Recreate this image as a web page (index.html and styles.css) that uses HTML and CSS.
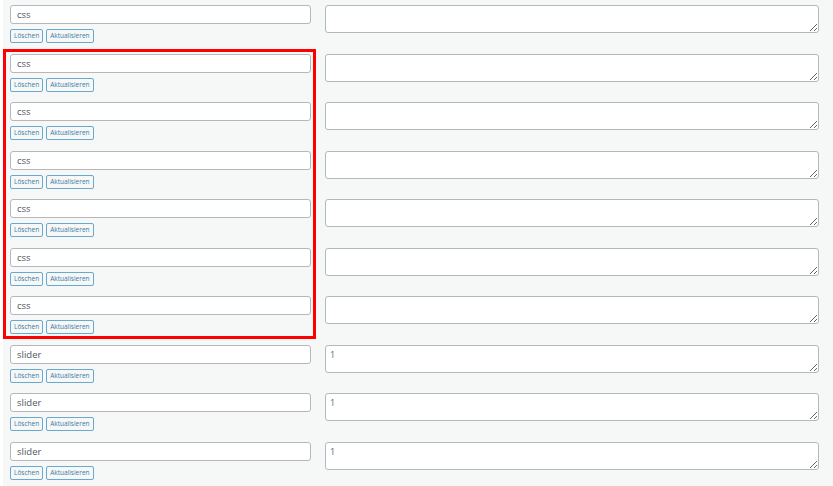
FILE: index.html
```html
<!DOCTYPE html>
<html lang="de">
<head>
    <meta charset="UTF-8">
    <meta name="viewport" content="width=device-width, initial-scale=1.0">
    <title>Optionen</title>
    <link rel="stylesheet" href="styles.css">
</head>
<body>
    <div class="options">
        <div class="row">
            <div class="field">
                <input class="key" value="css">
                <div class="actions">
                    <button class="btn">Löschen</button>
                    <button class="btn">Aktualisieren</button>
                </div>
            </div>
            <textarea class="value"></textarea>
        </div>

        <div class="marked">
            <div class="row">
                <div class="field">
                    <input class="key" value="css">
                    <div class="actions">
                        <button class="btn">Löschen</button>
                        <button class="btn">Aktualisieren</button>
                    </div>
                </div>
                <textarea class="value"></textarea>
            </div>
            <div class="row">
                <div class="field">
                    <input class="key" value="css">
                    <div class="actions">
                        <button class="btn">Löschen</button>
                        <button class="btn">Aktualisieren</button>
                    </div>
                </div>
                <textarea class="value"></textarea>
            </div>
            <div class="row">
                <div class="field">
                    <input class="key" value="css">
                    <div class="actions">
                        <button class="btn">Löschen</button>
                        <button class="btn">Aktualisieren</button>
                    </div>
                </div>
                <textarea class="value"></textarea>
            </div>
            <div class="row">
                <div class="field">
                    <input class="key" value="css">
                    <div class="actions">
                        <button class="btn">Löschen</button>
                        <button class="btn">Aktualisieren</button>
                    </div>
                </div>
                <textarea class="value"></textarea>
            </div>
            <div class="row">
                <div class="field">
                    <input class="key" value="css">
                    <div class="actions">
                        <button class="btn">Löschen</button>
                        <button class="btn">Aktualisieren</button>
                    </div>
                </div>
                <textarea class="value"></textarea>
            </div>
            <div class="row">
                <div class="field">
                    <input class="key" value="css">
                    <div class="actions">
                        <button class="btn">Löschen</button>
                        <button class="btn">Aktualisieren</button>
                    </div>
                </div>
                <textarea class="value"></textarea>
            </div>
        </div>

        <div class="row">
            <div class="field">
                <input class="key" value="slider">
                <div class="actions">
                    <button class="btn">Löschen</button>
                    <button class="btn">Aktualisieren</button>
                </div>
            </div>
            <textarea class="value">1</textarea>
        </div>
        <div class="row">
            <div class="field">
                <input class="key" value="slider">
                <div class="actions">
                    <button class="btn">Löschen</button>
                    <button class="btn">Aktualisieren</button>
                </div>
            </div>
            <textarea class="value">1</textarea>
        </div>
        <div class="row">
            <div class="field">
                <input class="key" value="slider">
                <div class="actions">
                    <button class="btn">Löschen</button>
                    <button class="btn">Aktualisieren</button>
                </div>
            </div>
            <textarea class="value">1</textarea>
        </div>
    </div>
</body>
</html>
```

FILE: styles.css
```css
html, body {
    margin: 0;
    background-color: #fff;
    font-family: "Open Sans", "Noto Sans", sans-serif;
}

.options {
    margin-left: 3px;
    min-height: 486px;
    background-color: #f6f7f7;
    overflow: hidden;
}

.row {
    display: flex;
    gap: 14px;
    height: 48.5px;
    box-sizing: border-box;
    padding: 5px 0 0 7px;
}

.field {
    width: 301px;
}

.key {
    display: block;
    width: 301px;
    height: 19px;
    box-sizing: border-box;
    margin: 0;
    padding: 0 6px;
    border: 1px solid #b4b8bd;
    border-radius: 3px;
    background-color: #fff;
    font-family: inherit;
    font-size: 9.5px;
    color: #50575e;
}

.actions {
    display: flex;
    gap: 3px;
    margin-top: 5px;
}

.btn {
    height: 14px;
    padding: 0 3px;
    border: 1px solid #6aa8cf;
    border-radius: 2px;
    background-color: #f6f7f7;
    font-family: inherit;
    font-size: 6.5px;
    line-height: 12px;
    color: #3b7aa5;
    cursor: pointer;
}

.value {
    display: block;
    width: 494px;
    height: 28px;
    box-sizing: border-box;
    margin: 0;
    padding: 3px 4px;
    border: 1px solid #b4b8bd;
    border-radius: 3px;
    background-color: #fff;
    font-family: inherit;
    font-size: 9px;
    line-height: 12px;
    color: #5a6485;
}

/* red frame round the css entries */
.marked {
    position: relative;
}
.marked::after {
    content: "";
    position: absolute;
    left: 0;
    top: 0;
    width: 313px;
    bottom: 1px;
    box-sizing: border-box;
    border: 3px solid #f00;
    pointer-events: none;
}
```
